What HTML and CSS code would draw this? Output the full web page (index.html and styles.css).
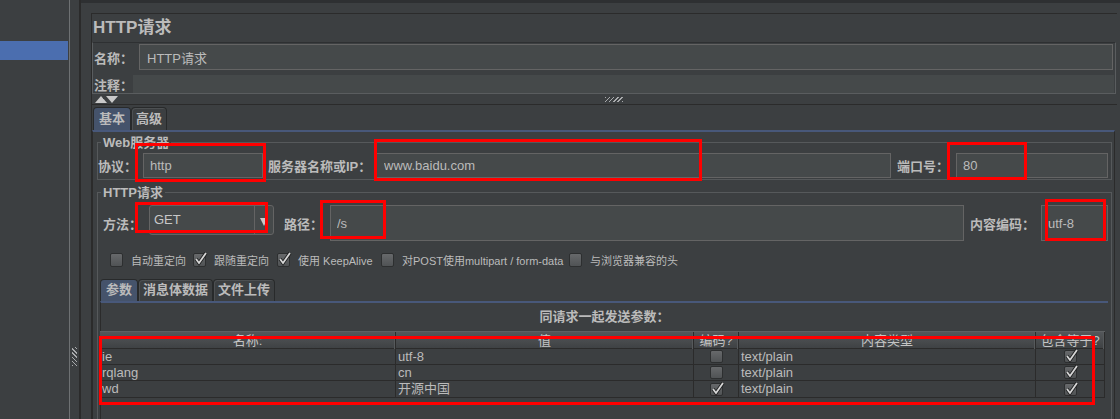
FILE: index.html
```html
<!DOCTYPE html>
<html lang="zh-CN">
<head>
    <meta charset="UTF-8">
    <title>HTTP请求</title>
    <link rel="stylesheet" href="styles.css">
</head>
<body>

<div class="app">

    <!-- 左侧测试计划树 -->
    <div class="tree">
        <div class="tree-row selected"></div>
    </div>
    <div class="splitter"><span class="grip grip-v"></span></div>

    <!-- 右侧编辑区 -->
    <div class="main">
        <div class="editor">
            <div class="title">HTTP请求</div>

            <div class="namebox">
                <div class="name-row">
                    <label class="lbl lbl-name">名称：</label>
                    <input class="field" type="text" value="HTTP请求">
                </div>
                <div class="comment-row">
                    <label class="lbl lbl-comment">注释：</label>
                    <div class="comment"></div>
                </div>
            </div>

            <div class="collapse-bar">
                <span class="arrow up"></span>
                <span class="arrow down"></span>
                <span class="grip grip-h"></span>
            </div>

            <div class="tabs">
                <div class="tab active">基本</div>
                <div class="tab">高级</div>
            </div>

            <div class="tab-body">

                <fieldset class="group group-web">
                    <legend>Web服务器</legend>
                    <div class="row row-server">
                        <label class="lbl lbl-protocol">协议：</label>
                        <input class="field f-protocol" type="text" value="http">
                        <label class="lbl lbl-server">服务器名称或IP：</label>
                        <input class="field f-server" type="text" value="www.baidu.com">
                        <label class="lbl lbl-port">端口号：</label>
                        <input class="field f-port" type="text" value="80">
                    </div>
                </fieldset>

                <fieldset class="group group-http">
                    <legend>HTTP请求</legend>
                    <div class="row row-request">
                        <label class="lbl lbl-method">方法：</label>
                        <div class="select">
                            <span class="select-value">GET</span>
                            <span class="select-btn"><span class="caret"></span></span>
                        </div>
                        <label class="lbl lbl-path">路径：</label>
                        <input class="field f-path" type="text" value="/s">
                        <label class="lbl lbl-encoding">内容编码：</label>
                        <input class="field f-encoding" type="text" value="utf-8">
                    </div>

                    <div class="checks">
                        <div class="check c1"><span class="cb"></span>自动重定向</div>
                        <div class="check c2">
                            <span class="cb checked"><svg viewBox="0 0 16 16" width="16" height="16"><polyline points="3,8 6,12 13,2" fill="none" stroke="#1f2021" stroke-width="3.6"/><polyline points="3,8 6,12 13,2" fill="none" stroke="#d6d6d6" stroke-width="1.8"/></svg></span>跟随重定向
                        </div>
                        <div class="check c3">
                            <span class="cb checked"><svg viewBox="0 0 16 16" width="16" height="16"><polyline points="3,8 6,12 13,2" fill="none" stroke="#1f2021" stroke-width="3.6"/><polyline points="3,8 6,12 13,2" fill="none" stroke="#d6d6d6" stroke-width="1.8"/></svg></span>使用 KeepAlive
                        </div>
                        <div class="check c4"><span class="cb"></span>对POST使用multipart / form-data</div>
                        <div class="check"><span class="cb"></span>与浏览器兼容的头</div>
                    </div>

                    <div class="tabs sub-tabs">
                        <div class="tab active">参数</div>
                        <div class="tab">消息体数据</div>
                        <div class="tab">文件上传</div>
                    </div>

                    <div class="sub-body">
                        <div class="params-title">同请求一起发送参数：</div>
                        <div class="table">
                            <div class="thead">
                                <div class="th">名称:</div>
                                <div class="th">值</div>
                                <div class="th">编码?</div>
                                <div class="th">内容类型</div>
                                <div class="th">包含等于?</div>
                            </div>
                            <div class="tr">
                                <div class="td">ie</div>
                                <div class="td">utf-8</div>
                                <div class="td td-check"><span class="cb"></span></div>
                                <div class="td">text/plain</div>
                                <div class="td td-check"><span class="cb checked"><svg viewBox="0 0 16 16" width="16" height="16"><polyline points="3,8 6,12 13,2" fill="none" stroke="#1f2021" stroke-width="3.6"/><polyline points="3,8 6,12 13,2" fill="none" stroke="#d6d6d6" stroke-width="1.8"/></svg></span></div>
                            </div>
                            <div class="tr">
                                <div class="td">rqlang</div>
                                <div class="td">cn</div>
                                <div class="td td-check"><span class="cb"></span></div>
                                <div class="td">text/plain</div>
                                <div class="td td-check"><span class="cb checked"><svg viewBox="0 0 16 16" width="16" height="16"><polyline points="3,8 6,12 13,2" fill="none" stroke="#1f2021" stroke-width="3.6"/><polyline points="3,8 6,12 13,2" fill="none" stroke="#d6d6d6" stroke-width="1.8"/></svg></span></div>
                            </div>
                            <div class="tr">
                                <div class="td">wd</div>
                                <div class="td">开源中国</div>
                                <div class="td td-check"><span class="cb checked"><svg viewBox="0 0 16 16" width="16" height="16"><polyline points="3,8 6,12 13,2" fill="none" stroke="#1f2021" stroke-width="3.6"/><polyline points="3,8 6,12 13,2" fill="none" stroke="#d6d6d6" stroke-width="1.8"/></svg></span></div>
                                <div class="td">text/plain</div>
                                <div class="td td-check"><span class="cb checked"><svg viewBox="0 0 16 16" width="16" height="16"><polyline points="3,8 6,12 13,2" fill="none" stroke="#1f2021" stroke-width="3.6"/><polyline points="3,8 6,12 13,2" fill="none" stroke="#d6d6d6" stroke-width="1.8"/></svg></span></div>
                            </div>
                        </div>
                    </div>
                </fieldset>

            </div>
        </div>
    </div>

    <!-- 红色标注框 -->
    <div class="mark mark-protocol"></div>
    <div class="mark mark-server"></div>
    <div class="mark mark-port"></div>
    <div class="mark mark-method"></div>
    <div class="mark mark-path"></div>
    <div class="mark mark-encoding"></div>
    <div class="mark mark-table"></div>

</div>

</body>
</html>
```

FILE: styles.css
```css
* {
    box-sizing: border-box;
}
body {
    margin: 0;
    width: 1120px;
    height: 419px;
    overflow: hidden;
    background-color: #3c3f41;
    color: #bbbbbb;
    font-family: "Liberation Sans", "Noto Sans CJK SC", sans-serif;
    font-size: 13px;
}
.app {
    position: relative;
    display: grid;
    grid-template-columns: 68px 13px 1fr;
    height: 419px;
    overflow: hidden;
}

/* tree */
.tree {
    padding-top: 41px;
}
.tree-row.selected {
    height: 19px;
    background-color: #4b6eaf;
}
.splitter {
    padding-top: 347px;
    background: linear-gradient(to right, #3c3f41 0 1px, #6e7173 1px 2px, #3c3f41 2px 11px, #2b2b2b 11px 13px);
}
.grip {
    display: block;
}
.grip-v {
    width: 5px;
    height: 19px;
    margin-left: 4px;
    background: repeating-linear-gradient(45deg, #a9abad 0 1px, transparent 1px 3px);
}
.grip-h {
    width: 18px;
    height: 5px;
    margin-left: 487px;
    background: repeating-linear-gradient(135deg, #a9abad 0 1px, transparent 1px 3px);
}

/* main */
.main {
    height: 419px;
    overflow: hidden;
    border-top: 3px solid #2e3032;
    padding: 10px 3px 0 10px;
}
.editor {
    border-top: 1px solid #2b2b2b;
    border-left: 1px solid #2b2b2b;
    height: 100%;
}
.title {
    height: 28px;
    line-height: 27px;
    padding-left: 1px;
    font-size: 17px;
    font-weight: bold;
}
.lbl {
    flex: none;
    font-weight: bold;
    white-space: nowrap;
}
.field {
    height: 100%;
    border: 1px solid #646464;
    background-color: #45494a;
    color: #bbbbbb;
    font-family: inherit;
    font-size: 13px;
    padding: 0 6px;
    outline: none;
    min-width: 0;
}

.namebox {
    margin-right: 1px;
    border: 1px solid #5a5d5f;
    border-top-color: #2e3032;
    padding: 1px 1px 0 1px;
}
.name-row {
    display: flex;
    align-items: center;
    height: 26px;
}
.name-row .field {
    flex: 1;
    margin-right: 1px;
    padding-left: 7px;
}
.lbl-name {
    width: 45px;
}
.comment-row {
    display: flex;
    align-items: center;
    height: 18px;
    margin-top: 5px;
}
.lbl-comment {
    width: 39px;
}
.comment {
    flex: 1;
    height: 100%;
    background-color: #45494a;
}

.collapse-bar {
    display: flex;
    align-items: center;
    height: 11px;
    padding-left: 3px;
    border-bottom: 1px solid #2b2b2b;
}
.arrow {
    width: 0;
    height: 0;
    border-left: 6px solid transparent;
    border-right: 6px solid transparent;
}
.arrow.up {
    border-bottom: 7px solid #c9c9c9;
}
.arrow.down {
    border-top: 7px solid #c9c9c9;
    margin-left: -1px;
}

/* tabs */
.tabs {
    display: flex;
    height: 23px;
    margin-top: 2px;
    padding-left: 1px;
}
.tab {
    height: 100%;
    line-height: 21px;
    padding: 0 4px;
    border: 1px solid #282a2b;
    border-bottom: none;
    border-radius: 4px 4px 0 0;
    box-shadow: inset 1px 1px 0 #4d5052;
    font-size: 13px;
    font-weight: bold;
    white-space: nowrap;
}
.tab.active {
    padding: 0 5px;
    background-color: #45536b;
    box-shadow: none;
}
.tab-body {
    margin-right: 2px;
    height: 289px;
    border-top: 2px solid #48587a;
    border-left: 1px solid #2b2b2b;
    border-right: 1px solid #2b2b2b;
    padding: 3px 2px 0 4px;
}

/* groups */
.group {
    margin: 0;
    padding: 0 3px 1px 0;
    border: 1px solid #56595b;
    min-width: 0;
}
.group legend {
    margin-left: 3px;
    padding: 0 2px;
    line-height: 15px;
    font-weight: bold;
}
.group-http {
    margin-top: 5px;
    height: 234px;
    border-bottom: none;
}
.row {
    display: flex;
    align-items: center;
}
.row-server {
    height: 25px;
    margin-top: 3px;
}
.lbl-protocol { width: 45px; }
.f-protocol { width: 120px; }
.lbl-server { width: 108px; margin-left: 5px; }
.f-server { flex: 1; padding-left: 7px; }
.lbl-port { width: 59px; margin-left: 6px; }
.f-port { width: 152px; }

.row-request {
    height: 36px;
    margin-top: 5px;
    padding-left: 5px;
}
.lbl-method { width: 46px; }
.select {
    flex: none;
    align-self: flex-start;
    display: flex;
    width: 125px;
    height: 30px;
    border: 1px solid #646464;
    border-radius: 3px;
    background-color: #45494a;
}
.select-value {
    flex: 1;
    line-height: 28px;
    padding-left: 4px;
    color: #c8c8c8;
}
.select-btn {
    width: 19px;
    border-left: 1px solid #646464;
    display: flex;
    align-items: center;
    justify-content: center;
    padding-top: 4px;
}
.caret {
    border-left: 4px solid transparent;
    border-right: 4px solid transparent;
    border-top: 8px solid #c8c8c8;
}
.lbl-path { width: 46px; margin-left: 10px; }
.f-path { flex: 1; }
.lbl-encoding { width: 71px; margin-left: 6px; }
.f-encoding { width: 67px; }

/* checkboxes */
.checks {
    display: flex;
    align-items: center;
    height: 14px;
    margin-top: 12px;
    padding-left: 12px;
    font-size: 11px;
}
.check {
    display: flex;
    align-items: center;
    flex: none;
    white-space: nowrap;
}
.check .cb {
    margin-right: 8px;
}
.c1 { width: 83px; }
.c2 { width: 84px; }
.c3 { width: 104px; }
.c4 { width: 188px; }
.cb {
    position: relative;
    display: inline-block;
    width: 13px;
    height: 14px;
    border: 1px solid #2d2f30;
    border-radius: 2px;
    background: linear-gradient(#67696b, #505355);
}
.cb svg {
    position: absolute;
    left: -1px;
    top: -3px;
}

/* parameter tabs */
.sub-tabs {
    margin-top: 12px;
    padding-left: 2px;
    height: 22px;
}
.sub-tabs .tab {
    line-height: 20px;
}
.sub-body {
    margin-left: 2px;
    height: 118px;
    border-top: 2px solid #48587a;
    border-left: 1px solid #2b2b2b;
}
.params-title {
    height: 28px;
    line-height: 28px;
    text-align: center;
    font-weight: bold;
}
.table {
    margin-left: -1px;
    width: 1005px;
    border-bottom: 1px solid #2b2b2b;
}
.thead, .tr {
    display: grid;
    grid-template-columns: 296px 298px 45px 297px 69px;
}
.thead {
    height: 18px;
    background: linear-gradient(#54575a, #3f4244);
    border-top: 1px solid #5e6163;
    border-bottom: 1px solid #2b2b2b;
}
.th {
    line-height: 17px;
    text-align: center;
    border-right: 1px solid #2b2b2b;
    box-shadow: inset -1px 0 0 #56595b;
    color: #c4c4c4;
}
.tr {
    height: 16px;
    border-bottom: 1px solid #2b2b2b;
}
.tr:last-child {
    border-bottom: none;
}
.td {
    line-height: 15px;
    padding-left: 2px;
    border-right: 1px solid #2b2b2b;
    overflow: hidden;
    white-space: nowrap;
}
.td-check {
    display: flex;
    align-items: center;
    justify-content: center;
    padding-left: 0;
}
.td-check .cb {
    height: 13px;
}

/* red annotation boxes */
.mark {
    position: absolute;
    border: 3px solid #ff0000;
}
.mark-protocol { left: 135px; top: 143px; width: 131px; height: 39px; }
.mark-server { left: 374px; top: 139px; width: 328px; height: 42px; }
.mark-port { left: 947px; top: 142px; width: 80px; height: 38px; }
.mark-method { left: 135px; top: 202px; width: 133px; height: 31px; }
.mark-path { left: 320px; top: 200px; width: 66px; height: 39px; }
.mark-encoding { left: 1045px; top: 199px; width: 61px; height: 42px; }
.mark-table { left: 99px; top: 336px; width: 996px; height: 69px; }
```
